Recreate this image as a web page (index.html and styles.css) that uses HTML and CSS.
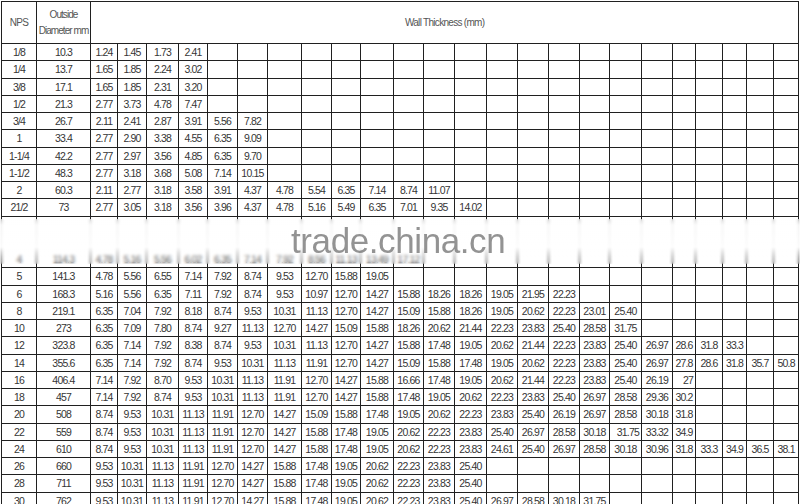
FILE: index.html
```html
<!DOCTYPE html>
<html>
<head>
<meta charset="utf-8">
<link rel="stylesheet" href="styles.css">
</head>
<body>
<div class="page">
<table class="grid">
<colgroup>
<col class="c-nps"><col class="c-od">
<col style="width:27px"><col style="width:29px"><col style="width:32px"><col style="width:29px"><col style="width:30px"><col style="width:30px"><col style="width:34px"><col style="width:30px"><col style="width:29px"><col style="width:33px"><col style="width:30px"><col style="width:31px"><col style="width:32px"><col style="width:31px"><col style="width:31px"><col style="width:31px"><col style="width:30px"><col style="width:32px"><col style="width:31px"><col style="width:23px"><col style="width:27px"><col style="width:24px"><col style="width:27px"><col style="width:25px">
</colgroup>
<thead>
<tr class="head"><th>NPS</th><th class="od-head">Outside<br>Diameter mm</th><th colspan="24">Wall Thickness (mm)</th></tr>
</thead>
<tbody>
<tr><td>1/8</td><td>10.3</td><td>1.24</td><td>1.45</td><td>1.73</td><td>2.41</td><td></td><td></td><td></td><td></td><td></td><td></td><td></td><td></td><td></td><td></td><td></td><td></td><td></td><td></td><td></td><td></td><td></td><td></td><td></td><td></td></tr>
<tr><td>1/4</td><td>13.7</td><td>1.65</td><td>1.85</td><td>2.24</td><td>3.02</td><td></td><td></td><td></td><td></td><td></td><td></td><td></td><td></td><td></td><td></td><td></td><td></td><td></td><td></td><td></td><td></td><td></td><td></td><td></td><td></td></tr>
<tr><td>3/8</td><td>17.1</td><td>1.65</td><td>1.85</td><td>2.31</td><td>3.20</td><td></td><td></td><td></td><td></td><td></td><td></td><td></td><td></td><td></td><td></td><td></td><td></td><td></td><td></td><td></td><td></td><td></td><td></td><td></td><td></td></tr>
<tr><td>1/2</td><td>21.3</td><td>2.77</td><td>3.73</td><td>4.78</td><td>7.47</td><td></td><td></td><td></td><td></td><td></td><td></td><td></td><td></td><td></td><td></td><td></td><td></td><td></td><td></td><td></td><td></td><td></td><td></td><td></td><td></td></tr>
<tr><td>3/4</td><td>26.7</td><td>2.11</td><td>2.41</td><td>2.87</td><td>3.91</td><td>5.56</td><td>7.82</td><td></td><td></td><td></td><td></td><td></td><td></td><td></td><td></td><td></td><td></td><td></td><td></td><td></td><td></td><td></td><td></td><td></td><td></td></tr>
<tr><td>1</td><td>33.4</td><td>2.77</td><td>2.90</td><td>3.38</td><td>4.55</td><td>6.35</td><td>9.09</td><td></td><td></td><td></td><td></td><td></td><td></td><td></td><td></td><td></td><td></td><td></td><td></td><td></td><td></td><td></td><td></td><td></td><td></td></tr>
<tr><td>1-1/4</td><td>42.2</td><td>2.77</td><td>2.97</td><td>3.56</td><td>4.85</td><td>6.35</td><td>9.70</td><td></td><td></td><td></td><td></td><td></td><td></td><td></td><td></td><td></td><td></td><td></td><td></td><td></td><td></td><td></td><td></td><td></td><td></td></tr>
<tr><td>1-1/2</td><td>48.3</td><td>2.77</td><td>3.18</td><td>3.68</td><td>5.08</td><td>7.14</td><td>10.15</td><td></td><td></td><td></td><td></td><td></td><td></td><td></td><td></td><td></td><td></td><td></td><td></td><td></td><td></td><td></td><td></td><td></td><td></td></tr>
<tr><td>2</td><td>60.3</td><td>2.11</td><td>2.77</td><td>3.18</td><td>3.58</td><td>3.91</td><td>4.37</td><td>4.78</td><td>5.54</td><td>6.35</td><td>7.14</td><td>8.74</td><td>11.07</td><td></td><td></td><td></td><td></td><td></td><td></td><td></td><td></td><td></td><td></td><td></td><td></td></tr>
<tr><td>21/2</td><td>73</td><td>2.77</td><td>3.05</td><td>3.18</td><td>3.56</td><td>3.96</td><td>4.37</td><td>4.78</td><td>5.16</td><td>5.49</td><td>6.35</td><td>7.01</td><td>9.35</td><td>14.02</td><td></td><td></td><td></td><td></td><td></td><td></td><td></td><td></td><td></td><td></td><td></td></tr>
<tr class="hid"><td></td><td></td><td></td><td></td><td></td><td></td><td></td><td></td><td></td><td></td><td></td><td></td><td></td><td></td><td></td><td></td><td></td><td></td><td></td><td></td><td></td><td></td><td></td><td></td><td></td><td></td></tr>
<tr class="hid"><td></td><td></td><td></td><td></td><td></td><td></td><td></td><td></td><td></td><td></td><td></td><td></td><td></td><td></td><td></td><td></td><td></td><td></td><td></td><td></td><td></td><td></td><td></td><td></td><td></td><td></td></tr>
<tr><td>4</td><td>114.3</td><td>4.78</td><td>5.16</td><td>5.56</td><td>6.02</td><td>6.35</td><td>7.14</td><td>7.92</td><td>8.56</td><td>11.13</td><td>13.49</td><td>17.12</td><td></td><td></td><td></td><td></td><td></td><td></td><td></td><td></td><td></td><td></td><td></td><td></td><td></td></tr>
<tr><td>5</td><td>141.3</td><td>4.78</td><td>5.56</td><td>6.55</td><td>7.14</td><td>7.92</td><td>8.74</td><td>9.53</td><td>12.70</td><td>15.88</td><td>19.05</td><td></td><td></td><td></td><td></td><td></td><td></td><td></td><td></td><td></td><td></td><td></td><td></td><td></td><td></td></tr>
<tr><td>6</td><td>168.3</td><td>5.16</td><td>5.56</td><td>6.35</td><td>7.11</td><td>7.92</td><td>8.74</td><td>9.53</td><td>10.97</td><td>12.70</td><td>14.27</td><td>15.88</td><td>18.26</td><td>18.26</td><td>19.05</td><td>21.95</td><td>22.23</td><td></td><td></td><td></td><td></td><td></td><td></td><td></td><td></td></tr>
<tr><td>8</td><td>219.1</td><td>6.35</td><td>7.04</td><td>7.92</td><td>8.18</td><td>8.74</td><td>9.53</td><td>10.31</td><td>11.13</td><td>12.70</td><td>14.27</td><td>15.09</td><td>15.88</td><td>18.26</td><td>19.05</td><td>20.62</td><td>22.23</td><td>23.01</td><td>25.40</td><td></td><td></td><td></td><td></td><td></td><td></td></tr>
<tr><td>10</td><td>273</td><td>6.35</td><td>7.09</td><td>7.80</td><td>8.74</td><td>9.27</td><td>11.13</td><td>12.70</td><td>14.27</td><td>15.09</td><td>15.88</td><td>18.26</td><td>20.62</td><td>21.44</td><td>22.23</td><td>23.83</td><td>25.40</td><td>28.58</td><td>31.75</td><td></td><td></td><td></td><td></td><td></td><td></td></tr>
<tr><td>12</td><td>323.8</td><td>6.35</td><td>7.14</td><td>7.92</td><td>8.38</td><td>8.74</td><td>9.53</td><td>10.31</td><td>11.13</td><td>12.70</td><td>14.27</td><td>15.88</td><td>17.48</td><td>19.05</td><td>20.62</td><td>21.44</td><td>22.23</td><td>23.83</td><td>25.40</td><td>26.97</td><td>28.6</td><td>31.8</td><td>33.3</td><td></td><td></td></tr>
<tr><td>14</td><td>355.6</td><td>6.35</td><td>7.14</td><td>7.92</td><td>8.74</td><td>9.53</td><td>10.31</td><td>11.13</td><td>11.91</td><td>12.70</td><td>14.27</td><td>15.09</td><td>15.88</td><td>17.48</td><td>19.05</td><td>20.62</td><td>22.23</td><td>23.83</td><td>25.40</td><td>26.97</td><td>27.8</td><td>28.6</td><td>31.8</td><td>35.7</td><td>50.8</td></tr>
<tr><td>16</td><td>406.4</td><td>7.14</td><td>7.92</td><td>8.70</td><td>9.53</td><td>10.31</td><td>11.13</td><td>11.91</td><td>12.70</td><td>14.27</td><td>15.88</td><td>16.66</td><td>17.48</td><td>19.05</td><td>20.62</td><td>21.44</td><td>22.23</td><td>23.83</td><td>25.40</td><td>26.19</td><td class="r">27</td><td></td><td></td><td></td><td></td></tr>
<tr><td>18</td><td>457</td><td>7.14</td><td>7.92</td><td>8.74</td><td>9.53</td><td>10.31</td><td>11.13</td><td>11.91</td><td>12.70</td><td>14.27</td><td>15.88</td><td>17.48</td><td>19.05</td><td>20.62</td><td>22.23</td><td>23.83</td><td>25.40</td><td>26.97</td><td>28.58</td><td>29.36</td><td>30.2</td><td></td><td></td><td></td><td></td></tr>
<tr><td>20</td><td>508</td><td>8.74</td><td>9.53</td><td>10.31</td><td>11.13</td><td>11.91</td><td>12.70</td><td>14.27</td><td>15.09</td><td>15.88</td><td>17.48</td><td>19.05</td><td>20.62</td><td>22.23</td><td>23.83</td><td>25.40</td><td>26.19</td><td>26.97</td><td>28.58</td><td>30.18</td><td>31.8</td><td></td><td></td><td></td><td></td></tr>
<tr><td>22</td><td>559</td><td>8.74</td><td>9.53</td><td>10.31</td><td>11.13</td><td>11.91</td><td>12.70</td><td>14.27</td><td>15.88</td><td>17.48</td><td>19.05</td><td>20.62</td><td>22.23</td><td>23.83</td><td>25.40</td><td>26.97</td><td>28.58</td><td>30.18</td><td class="r">31.75</td><td>33.32</td><td>34.9</td><td></td><td></td><td></td><td></td></tr>
<tr><td>24</td><td>610</td><td>8.74</td><td>9.53</td><td>10.31</td><td>11.13</td><td>11.91</td><td>12.70</td><td>14.27</td><td>15.88</td><td>17.48</td><td>19.05</td><td>20.62</td><td>22.23</td><td>23.83</td><td>24.61</td><td>25.40</td><td>26.97</td><td>28.58</td><td>30.18</td><td>30.96</td><td>31.8</td><td>33.3</td><td>34.9</td><td>36.5</td><td>38.1</td></tr>
<tr><td>26</td><td>660</td><td>9.53</td><td>10.31</td><td>11.13</td><td>11.91</td><td>12.70</td><td>14.27</td><td>15.88</td><td>17.48</td><td>19.05</td><td>20.62</td><td>22.23</td><td>23.83</td><td>25.40</td><td></td><td></td><td></td><td></td><td></td><td></td><td></td><td></td><td></td><td></td><td></td></tr>
<tr><td>28</td><td>711</td><td>9.53</td><td>10.31</td><td>11.13</td><td>11.91</td><td>12.70</td><td>14.27</td><td>15.88</td><td>17.48</td><td>19.05</td><td>20.62</td><td>22.23</td><td>23.83</td><td>25.40</td><td></td><td></td><td></td><td></td><td></td><td></td><td></td><td></td><td></td><td></td><td></td></tr>
<tr><td>30</td><td>762</td><td>9.53</td><td>10.31</td><td>11.13</td><td>11.91</td><td>12.70</td><td>14.27</td><td>15.88</td><td>17.48</td><td>19.05</td><td>20.62</td><td>22.23</td><td>23.83</td><td>25.40</td><td>26.97</td><td>28.58</td><td>30.18</td><td>31.75</td><td></td><td></td><td></td><td></td><td></td><td></td><td></td></tr>
</tbody>
</table>
<div class="watermark"><span class="wm-text">trade.china.cn</span></div>
</div>
</body>
</html>
```

FILE: styles.css
```css
html, body {
  margin: 0;
  padding: 0;
  background: #ffffff;
}
body {
  width: 800px;
  height: 504px;
  overflow: hidden;
  font-family: "Liberation Sans", Arial, sans-serif;
}
.page {
  position: relative;
  padding: 1px 0 0 1px;
}
.grid {
  border-collapse: collapse;
  table-layout: fixed;
  width: 797px;
  font-size: 10.5px;
  letter-spacing: -0.8px;
  color: #353535;
}
.c-nps { width: 35px; }
.c-od { width: 54px; }
.grid th,
.grid td {
  border: 1px solid #202020;
  padding: 0;
  text-align: center;
  vertical-align: middle;
  white-space: nowrap;
  overflow: hidden;
}
.grid th {
  font-weight: normal;
  font-size: 10px;
  letter-spacing: -0.7px;
  color: #555555;
  line-height: 16px;
  overflow: visible;
}
.grid th.od-head {
  letter-spacing: -0.95px;
}
.head {
  height: 42px;
}
.grid tbody tr {
  height: 17.25px;
}
.grid td.r {
  text-align: right;
  padding-right: 2px;
}
.hid td {
  border-bottom-style: hidden;
}
.watermark {
  position: absolute;
  left: 0;
  top: 219px;
  width: 800px;
  height: 45px;
  box-sizing: border-box;
  padding: 4px 0 0 291px;
  background: linear-gradient(to bottom,
    rgba(255,255,255,0.5) 0px,
    rgba(255,255,255,0.9) 6px,
    rgba(255,255,255,0.95) 28px,
    rgba(255,255,255,0.6) 33px,
    rgba(255,255,255,0.3) 38px,
    rgba(255,255,255,0) 45px);
  backdrop-filter: blur(1.5px);
}
.wm-text {
  display: block;
  font-family: "Liberation Sans", Arial, sans-serif;
  font-size: 35px;
  line-height: 35px;
  letter-spacing: -0.4px;
  color: rgba(105,105,105,0.72);
}
```
